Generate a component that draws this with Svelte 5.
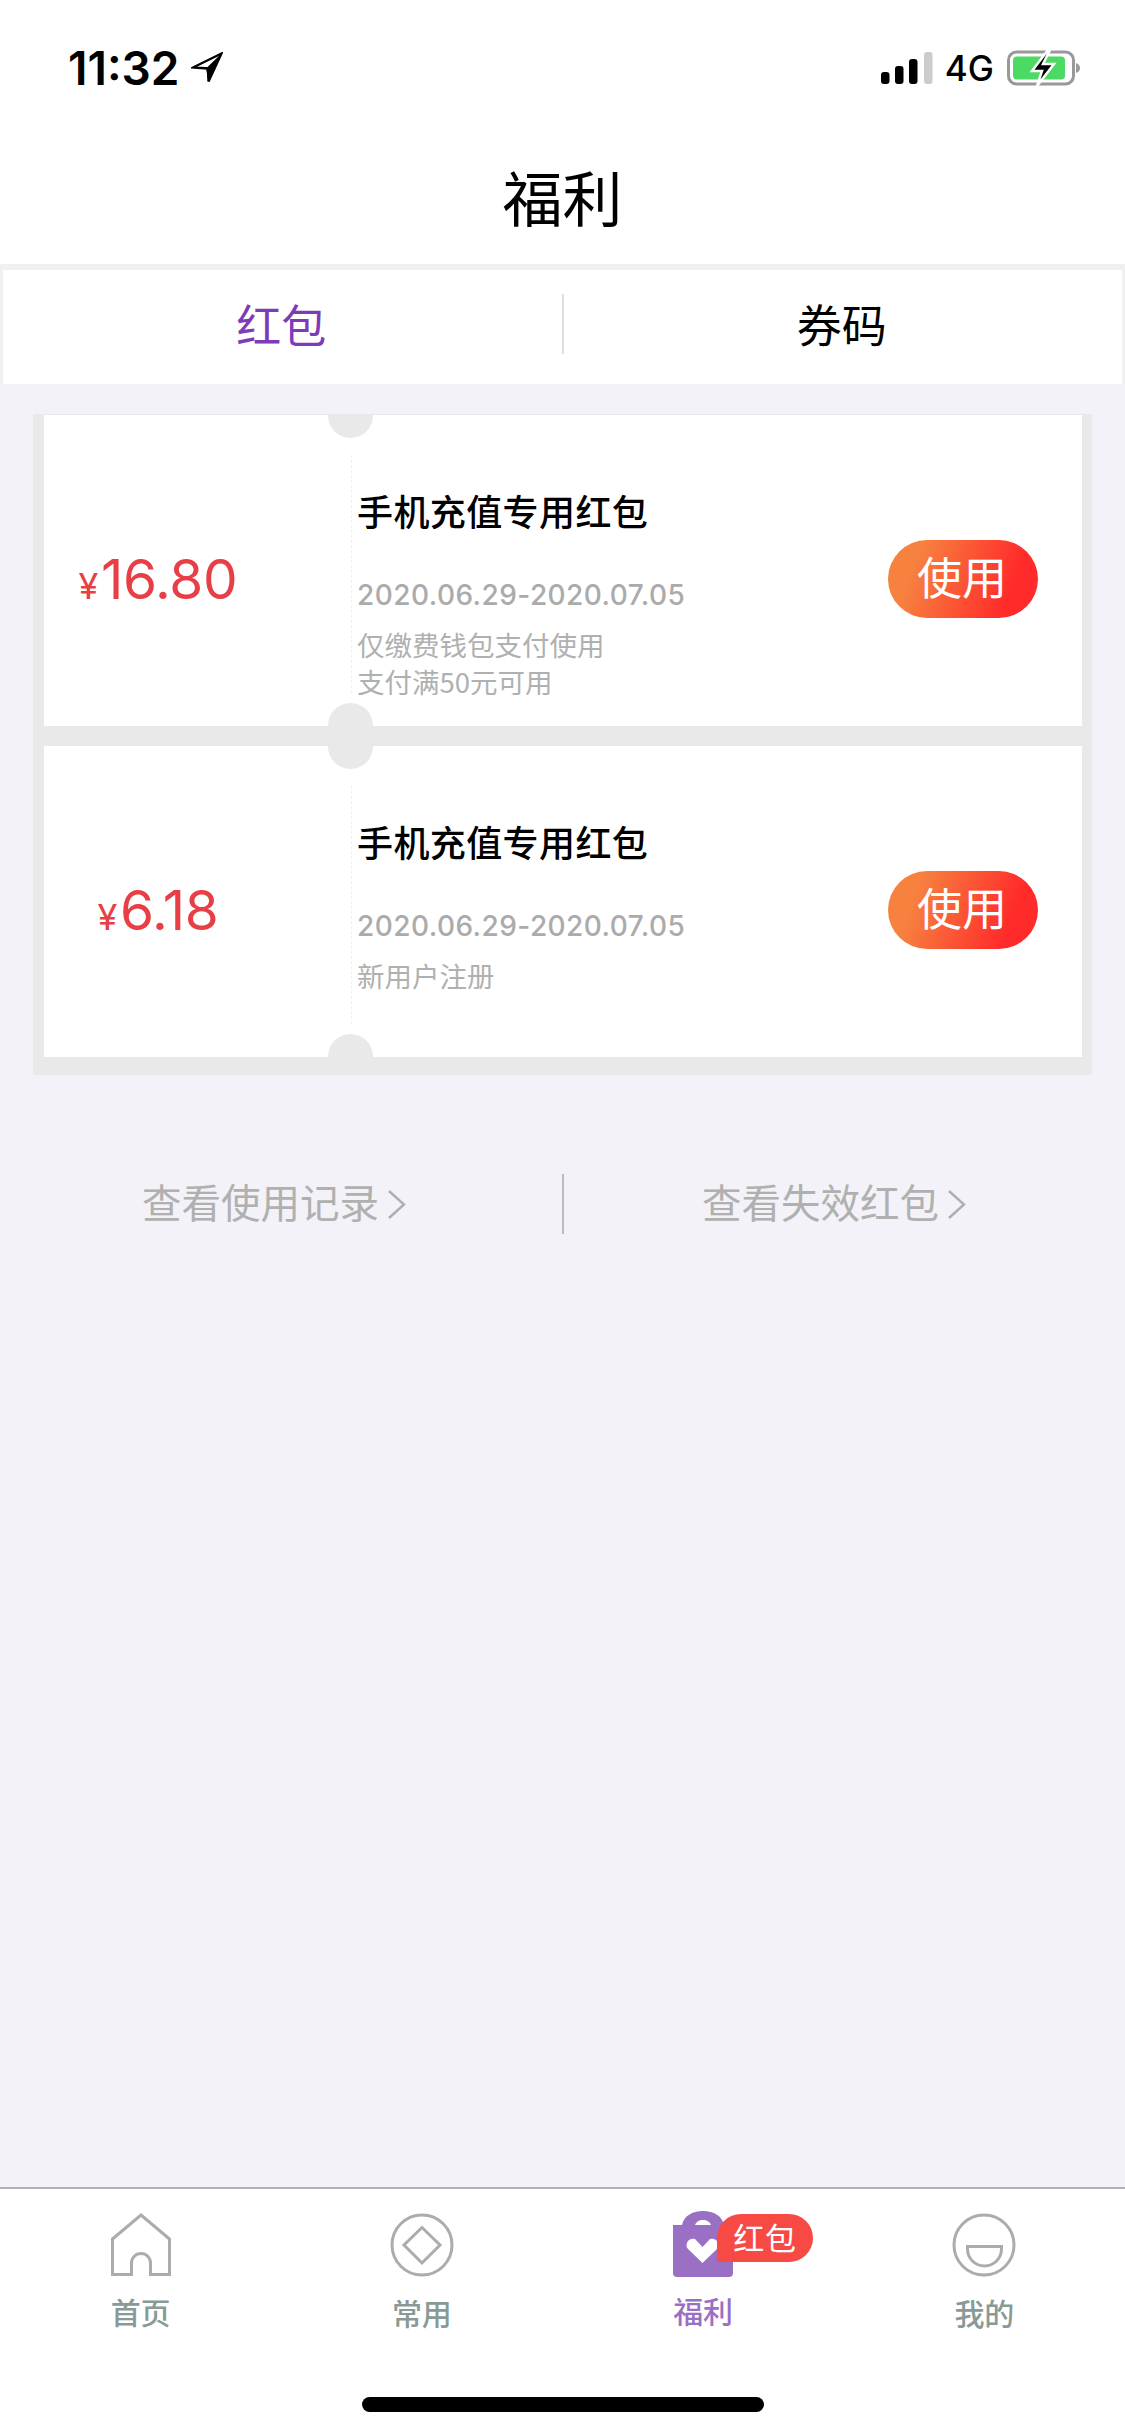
<script>
	let tickets = [
		{ yen: '16.80', notes: ['仅缴费钱包支付使用', '支付满50元可用'] },
		{ yen: '6.18', notes: ['新用户注册'] }
	];
	let links = ['查看使用记录', '查看失效红包'];
</script>

<div class="page">
	<header class="head">
		<div class="status">
			<div class="clock">
				<span>11:32</span>
				<svg width="32" height="32" viewBox="0 0 32 32">
					<path d="M30.500 1.500 2 15.500l15 1 .5 13z" fill="#fff" stroke="#000" stroke-width="2.400" />
					<path d="M30.500 1.500 15 16.500l2.500 13z" fill="#000" />
				</svg>
			</div>
			<div class="status-right">
				<svg class="signal" width="52" height="33" viewBox="0 0 52 33">
					<rect x="0" y="20" width="8.500" height="12" rx="3" fill="#000" />
					<rect x="14" y="14" width="8.500" height="18" rx="3" fill="#000" />
					<rect x="28" y="7" width="8.500" height="25" rx="3" fill="#000" />
					<rect x="43" y="0" width="8.500" height="32" rx="3" fill="#ccc" />
				</svg>
				<span class="net">4G</span>
				<svg width="74" height="36" viewBox="0 0 74 36">
					<rect x="1.500" y="2" width="65" height="32" rx="8" fill="none" stroke="#999" stroke-width="3" />
					<rect x="6" y="6.500" width="52" height="23" rx="4" fill="#4cd964" />
					<path d="M69 13c3 1 4 3 4 5s-1 4-4 5z" fill="#999" />
					<path d="M41 0 25 21h10l-5 15 17-22H36l7-14z" fill="#000" stroke="#fff" stroke-width="2.500" />
				</svg>
			</div>
		</div>
		<h1>福利</h1>
	</header>

	<div class="tabs">
		<div class="tabs-inner">
			<span class="on">红包</span>
			<i></i>
			<span>券码</span>
		</div>
	</div>

	<main class="body">
		<section class="tickets">
			{#each tickets as t}
				<article class="ticket">
					<div class="amount"><small>¥</small>{t.yen}</div>
					<div class="dash"></div>
					<div class="info">
						<h2>手机充值专用红包</h2>
						<p class="date">2020.06.29-2020.07.05</p>
						{#each t.notes as n}
							<p class="note">{n}</p>
						{/each}
					</div>
					<button class="use">使用</button>
					<b class="notch top"></b>
					<b class="notch bottom"></b>
				</article>
			{/each}
		</section>

		<div class="links">
			{#each links as l, i}
				<a href="#x" class="link">
					<span>{l}</span>
					<svg width="19" height="29" viewBox="0 0 19 29">
						<path d="M2 1l15 13.500L2 28" fill="none" stroke="#aeaeae" stroke-width="2.400" />
					</svg>
				</a>
				{#if i === 0}<i class="link-line"></i>{/if}
			{/each}
		</div>
	</main>

	<nav class="bar">
		<div class="item">
			<svg width="60" height="63" viewBox="0 0 60 63">
				<path d="M1.500 26 30 2l28.500 24v35.500H39.500V50a9.500 9.500 0 0 0-19 0v11.500H1.500z" fill="none" stroke="#acacac" stroke-width="3" />
			</svg>
			<span>首页</span>
		</div>
		<div class="item">
			<svg width="64" height="64" viewBox="0 0 64 64">
				<circle cx="32" cy="32" r="30" fill="none" stroke="#acacac" stroke-width="3" />
				<path d="M32 14.500 50 32 32 50 14 32z" fill="none" stroke="#acacac" stroke-width="3" />
			</svg>
			<span>常用</span>
		</div>
		<div class="item active">
			<div class="bag-wrap">
				<svg width="60" height="66" viewBox="0 0 60 66">
					<path d="M9 14C11 5 19 0 30 0s19 5 21 14h9v48a4 4 0 0 1-4 4H4a4 4 0 0 1-4-4V14z" fill="#9a70c4" />
					<path d="M22 14c1-3 4-5 8-5s7 2 8 5z" fill="#fff" />
					<path d="M29.500 52 15 38c-4-5 1-12 7-10l7.500 8 7.500-8c6-2 11 5 7 10z" fill="#fff" />
				</svg>
				<em class="badge">红包</em>
			</div>
			<span>福利</span>
		</div>
		<div class="item">
			<svg width="64" height="64" viewBox="0 0 64 64">
				<circle cx="32" cy="32" r="30" fill="none" stroke="#acacac" stroke-width="3" />
				<path d="M15.500 33.500h34V36a17 17 0 0 1-34 0z" fill="none" stroke="#acacac" stroke-width="3" />
			</svg>
			<span>我的</span>
		</div>
		<div class="home-bar"></div>
	</nav>
</div>

<style>
	:global(body) {
		margin: 0;
		background: #f2f2f8;
	}

	.page {
		display: flex;
		flex-direction: column;
		height: 2436px;
		overflow: hidden;
		font-family: 'Noto Sans CJK SC', sans-serif;
		background: #f2f2f8;
	}

	.head {
		background: #fff;
	}

	.status {
		display: flex;
		justify-content: space-between;
		align-items: center;
		height: 136px;
		padding: 0 44px 0 68px;
	}

	.clock {
		display: flex;
		align-items: center;
		gap: 11px;
		font-family: Inter, sans-serif;
		font-size: 46px;
		font-weight: 600;
		color: #000;
	}

	.status-right {
		display: flex;
		align-items: center;
		gap: 13px;
	}

	.signal {
		margin-right: -1px;
	}

	.net {
		font-family: Inter, sans-serif;
		font-size: 35px;
		font-weight: 500;
	}

	h1 {
		height: 128px;
		margin: 0;
		font-size: 60px;
		font-weight: 400;
		line-height: 120px;
		text-align: center;
		color: #000;
	}

	.tabs {
		padding: 6px 3px 0;
		background: #f0f0f0;
	}

	.tabs-inner {
		display: grid;
		grid-template-columns: 1fr 2px 1fr;
		align-items: center;
		height: 114px;
		background: #fff;
		font-size: 45px;
		text-align: center;
		color: #000;
	}

	.tabs-inner span {
		padding: 0 2px 8px 0;
	}

	.tabs-inner i {
		height: 60px;
		margin-bottom: 6px;
		background: #e0e0e0;
	}

	.tabs-inner .on {
		color: #7d3bb8;
	}

	.body {
		flex: 1;
		padding-top: 30px;
	}

	.tickets {
		display: flex;
		flex-direction: column;
		gap: 20px;
		margin: 0 33px;
		padding: 1px 10px 18px 11px;
		overflow: hidden;
		background: #e9e9e9;
	}

	.ticket {
		position: relative;
		display: flex;
		height: 311px;
		background: #fff;
	}

	.amount {
		width: 228px;
		margin-right: 79px;
		padding-top: 120px;
		box-sizing: border-box;
		font-family: Inter, sans-serif;
		font-size: 55px;
		line-height: 88px;
		text-align: center;
		letter-spacing: -0.3px;
		color: #e83e46;
	}

	.amount small {
		margin-right: 3px;
		font-size: 36px;
	}

	.dash {
		width: 0;
		height: 238px;
		margin-top: 40px;
		border-left: 1px dashed #f0f0f0;
	}

	.info {
		flex: 1;
		padding: 70px 0 0 5px;
	}

	h2 {
		margin: 0 0 42px;
		font-size: 36px;
		font-weight: 500;
		line-height: 50px;
		letter-spacing: 0.4px;
		color: #000;
	}

	p {
		margin: 0;
	}

	.date {
		margin-bottom: 13px;
		font-family: Inter, sans-serif;
		font-size: 28px;
		font-weight: 500;
		line-height: 36px;
		letter-spacing: 0.45px;
		color: #ababab;
	}

	.note {
		font-size: 27.500px;
		line-height: 37px;
		color: #b0b0b0;
	}

	.use {
		width: 150px;
		height: 78px;
		margin: 125px 44px 0 0;
		padding: 0 2px 8px 0;
		border: 0;
		border-radius: 39px;
		background: linear-gradient(110deg, #f7813f 20%, #ff2a2a 80%);
		font-family: inherit;
		font-size: 45px;
		color: #fff;
	}

	.notch {
		position: absolute;
		left: 284px;
		width: 45px;
		height: 45px;
		border-radius: 50%;
		background: #e9e9e9;
	}

	.notch.top {
		top: -22px;
	}

	.notch.bottom {
		bottom: -22px;
	}

	.links {
		display: grid;
		grid-template-columns: 562px 2px 1fr;
		align-items: center;
		height: 60px;
		margin-top: 97px;
	}

	.link {
		display: flex;
		align-items: center;
		gap: 8px;
		padding-left: 142px;
		font-size: 39.500px;
		color: #b0b0b0;
		text-decoration: none;
	}

	.link span {
		padding-bottom: 7px;
	}

	.link-line {
		height: 60px;
		background: #bdbdbd;
	}

	.link-line + .link {
		padding-left: 138px;
	}

	.bar {
		position: relative;
		display: grid;
		grid-template-columns: repeat(4, 1fr);
		align-items: start;
		height: 249px;
		box-sizing: border-box;
		padding-top: 24px;
		border-top: 2px solid #b1b1b7;
		background: #fff;
	}

	.item {
		display: flex;
		flex-direction: column;
		align-items: center;
		gap: 18px;
		font-size: 30px;
		font-weight: 500;
		line-height: 34px;
		color: #889a96;
	}

	.item svg {
		display: block;
	}

	.item.active {
		color: #9a70c4;
	}

	.bag-wrap {
		position: relative;
		margin: -2px 0;
	}

	.badge {
		position: absolute;
		top: 3px;
		left: 44px;
		width: 96px;
		height: 48px;
		border-radius: 24px 24px 24px 0;
		background: #f84a45;
		font-size: 31px;
		font-style: normal;
		font-weight: 400;
		line-height: 46px;
		text-align: center;
		letter-spacing: 1px;
		color: #fff;
	}

	.home-bar {
		position: absolute;
		left: 362px;
		bottom: 24px;
		width: 402px;
		height: 15px;
		border-radius: 8px;
		background: #000;
	}
</style>
